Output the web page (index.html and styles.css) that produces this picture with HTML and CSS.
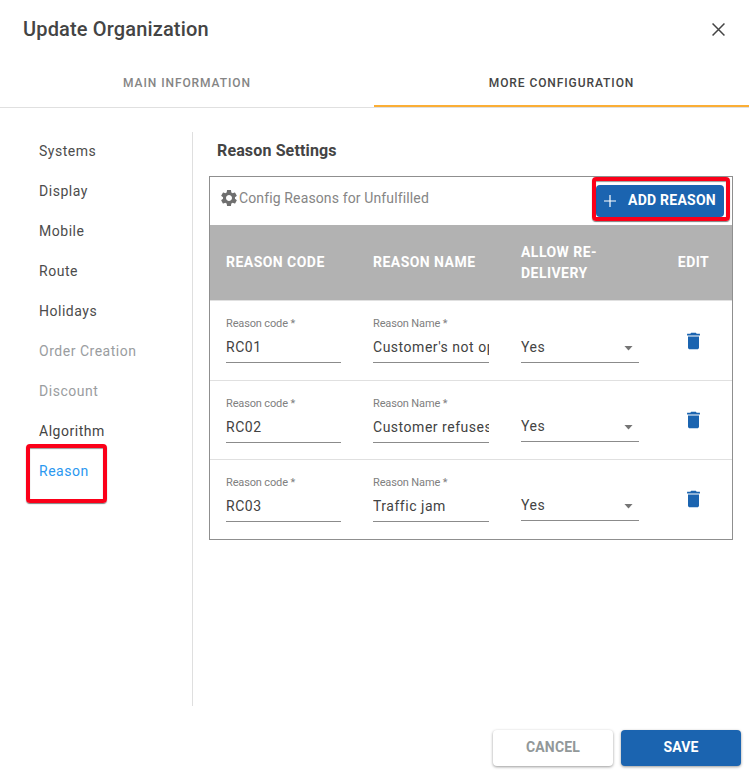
FILE: index.html
```html
<!DOCTYPE html>
<html lang="en">
<head>
<meta charset="utf-8">
<title>Update Organization</title>
<link rel="stylesheet" href="styles.css">
</head>
<body>
<svg class="defs" width="0" height="0">
  <symbol id="trash" viewBox="0 0 24 24"><path d="M6 19c0 1.1.9 2 2 2h8c1.100 0 2-.9 2-2V7H6v12zM19 4h-3.500l-1-1h-5l-1 1H5v2h14V4z"/></symbol>
</svg>
<div class="dialog">
  <header class="header">
    <h1 class="title">Update Organization</h1>
    <svg class="close" viewBox="0 0 12 12"><path d="M.5.5l11 11M11.500.5l-11 11"/></svg>
  </header>
  <nav class="tabs">
    <div class="tab">MAIN INFORMATION</div>
    <div class="tab tab-active">MORE CONFIGURATION</div>
  </nav>
  <main class="main">
    <aside class="sidebar">
      <div class="item"><span>Systems</span></div>
      <div class="item"><span>Display</span></div>
      <div class="item"><span>Mobile</span></div>
      <div class="item"><span>Route</span></div>
      <div class="item"><span>Holidays</span></div>
      <div class="item item-disabled"><span>Order Creation</span></div>
      <div class="item item-disabled"><span>Discount</span></div>
      <div class="item item-dark"><span>Algorithm</span></div>
      <div class="item item-selected"><span>Reason</span><i class="mark mark-item"></i></div>
    </aside>
    <section class="content">
      <h2 class="subtitle">Reason Settings</h2>
      <div class="card">
        <div class="toolbar">
          <svg class="gear" viewBox="0 0 24 24"><path d="M19.140 12.940c.04-.3.060-.61.060-.94 0-.32-.02-.64-.07-.94l2.030-1.580c.18-.14.23-.41.120-.61l-1.920-3.320c-.12-.22-.37-.29-.59-.22l-2.390.96c-.5-.38-1.030-.7-1.620-.94l-.36-2.540c-.04-.24-.24-.41-.48-.41h-3.840c-.24 0-.43.17-.47.41l-.36 2.540c-.59.24-1.130.57-1.620.94l-2.390-.96c-.22-.08-.47 0-.59.22L2.740 8.870c-.12.21-.08.47.120.61l2.030 1.580c-.05.3-.09.63-.09.94s.02.64.070.940l-2.030 1.580c-.18.14-.23.41-.12.610l1.920 3.320c.12.220.37.290.59.220l2.390-.96c.5.380 1.030.7 1.620.940l.36 2.540c.05.240.24.410.48.410h3.840c.24 0 .44-.17.470-.41l.36-2.540c.59-.24 1.130-.56 1.620-.94l2.390.96c.22.080.47 0 .59-.22l1.920-3.320c.12-.22.070-.47-.12-.61l-2.010-1.580zM12 15.600c-1.980 0-3.600-1.620-3.600-3.600s1.620-3.600 3.600-3.600 3.600 1.620 3.600 3.600-1.620 3.600-3.600 3.600z"/></svg>
          <span class="toolbar-text">Config Reasons for Unfulfilled</span>
          <div class="add">
            <svg class="plus" viewBox="0 0 12 12"><path d="M6 0v12M0 6h12"/></svg>
            <span>ADD REASON</span>
            <i class="mark mark-add"></i>
          </div>
        </div>
        <div class="grid head">
          <div>REASON CODE</div><div>REASON NAME</div><div>ALLOW RE-DELIVERY</div><div class="edit">EDIT</div>
        </div>
        <div class="grid row row-first">
          <div class="field"><label>Reason code *</label><div class="value">RC01</div></div>
          <div class="field"><label>Reason Name *</label><div class="value">Customer's not open</div></div>
          <div class="select"><span>Yes</span><i class="arrow"></i></div>
          <div class="action"><svg class="trash"><use href="#trash"/></svg></div>
        </div>
        <div class="grid row">
          <div class="field"><label>Reason code *</label><div class="value">RC02</div></div>
          <div class="field"><label>Reason Name *</label><div class="value">Customer refuses</div></div>
          <div class="select"><span>Yes</span><i class="arrow"></i></div>
          <div class="action"><svg class="trash"><use href="#trash"/></svg></div>
        </div>
        <div class="grid row">
          <div class="field"><label>Reason code *</label><div class="value">RC03</div></div>
          <div class="field"><label>Reason Name *</label><div class="value">Traffic jam</div></div>
          <div class="select"><span>Yes</span><i class="arrow"></i></div>
          <div class="action"><svg class="trash"><use href="#trash"/></svg></div>
        </div>
      </div>
    </section>
  </main>
  <footer class="footer">
    <div class="btn cancel">CANCEL</div>
    <div class="btn save">SAVE</div>
  </footer>
</div>
</body>
</html>
```
FILE: styles.css
```css
* { box-sizing: border-box; }
body {
  margin: 0;
  background: #fff;
  color: #444;
  font: 14px/20px Roboto, sans-serif;
  letter-spacing: .52px;
}
.defs { display: block; }
.dialog {
  width: 749px;
  height: 773px;
  display: flex;
  flex-direction: column;
  overflow: hidden;
}
.header {
  height: 58px;
  display: flex;
  align-items: center;
  justify-content: space-between;
  padding: 0 24px 0 23px;
  flex: none;
}
.title { margin: 0; font-size: 20px; font-weight: 500; letter-spacing: .15px; color: #444; }
.close { width: 13px; height: 13px; margin-top: 1px; stroke: #444; stroke-width: 1.4; fill: none; }
.tabs {
  height: 50px;
  flex: none;
  display: grid;
  grid-template-columns: 374px 375px;
  border-bottom: 1px solid #e0e0e0;
}
.tab {
  text-align: center;
  font-size: 12px;
  font-weight: 500;
  letter-spacing: .92px;
  line-height: 50px;
  height: 49px;
  color: #858585;
}
.tab-active { color: #444; border-bottom: 2px solid #fbae35; }
.main { display: flex; height: 574px; margin-top: 24px; flex: none; }
.sidebar { width: 193px; border-right: 1px solid #dfdfdf; padding-left: 39px; }
.item { position: relative; height: 40px; line-height: 38px; color: #4c4c4c; }
.item-disabled { color: #9a9d9f; }
.item-dark { color: #444; }
.item-selected { color: #2b98f0; }
.mark {
  position: absolute;
  border: 4px solid #fb0019;
  border-radius: 4px;
  box-shadow: 0 1px 1px rgba(0, 0, 0, .5), inset 0 1px 1px rgba(0, 0, 0, .4);
}
.mark-item { left: -13px; top: -8px; width: 81px; height: 59px; }
.mark-add { left: -4px; top: -8px; width: 138px; height: 44px; }
.content { padding-left: 16px; }
.subtitle {
  margin: 0;
  padding-left: 8px;
  height: 44px;
  line-height: 37px;
  font-size: 16px;
  font-weight: 700;
  letter-spacing: .14px;
  color: #444;
}
.card { width: 524px; height: 364px; border: 1px solid #8f8f8f; }
.toolbar { height: 48px; display: flex; align-items: center; padding: 0 8px 0 8.5px; }
.gear { width: 20px; height: 20px; margin: -6px -.5px 0 0; fill: #6f6f6f; }
.toolbar-text { margin: -6px 0 0 1px; color: #858585; letter-spacing: .13px; }
.add {
  position: relative;
  width: 128px;
  height: 32px;
  margin-left: auto;
  display: flex;
  align-items: center;
  padding-left: 8px;
  border-radius: 4px;
  background: #1b64b0;
  color: #fff;
  font-weight: 700;
  letter-spacing: .25px;
}
.add span { margin: -2px 0 0 12px; }
.plus { width: 12px; height: 12px; stroke: #fff; stroke-width: 1.2; }
.grid { display: grid; grid-template-columns: 147px 148px 150px 77px; }
.grid > div { margin: 0 16px; }
.head {
  height: 75px;
  align-items: center;
  background: #b2b2b2;
  color: #fff;
  font-weight: 700;
  line-height: 21px;
  letter-spacing: .46px;
}
.grid > .edit, .grid > .action { margin: 0; text-align: center; }
.row { height: 79px; border-top: 1px solid #e0e0e0; align-items: start; }
.row-first { height: 80px; }
.field { padding-top: 15px; height: 62px; border-bottom: 1px solid #8b8b8b; }
.field label { display: block; font-size: 11px; line-height: 16px; letter-spacing: -.14px; color: #808080; }
.value { height: 20px; margin-top: 5px; overflow: hidden; white-space: nowrap; color: #424242; }
.select {
  display: flex;
  justify-content: space-between;
  height: 61px;
  padding: 35px 6px 0 0;
  border-bottom: 1px solid #8b8b8b;
}
.row-first .select { height: 62px; padding-top: 36px; }
.arrow {
  margin-top: 8.5px;
  width: 9px;
  height: 5px;
  background: #757575;
  clip-path: polygon(0 0, 100% 0, 50% 100%);
}
.action { padding-top: 28px; height: 60px; }
.row-first .action { padding-top: 29px; }
.trash { display: block; width: 23px; height: 22px; margin: 0 0 0 27px; fill: #1b64b0; }
.footer { display: flex; gap: 8px; justify-content: flex-end; padding: 24px 8px 0 0; }
.btn {
  width: 120px;
  height: 36px;
  border-radius: 4px;
  text-align: center;
  line-height: 35px;
  font-weight: 700;
  letter-spacing: .18px;
  box-shadow: 0 1px 3px rgba(0, 0, 0, .4);
}
.cancel { color: #929899; background: #fff; }
.save { color: #fff; background: #1b64b0; }
```
